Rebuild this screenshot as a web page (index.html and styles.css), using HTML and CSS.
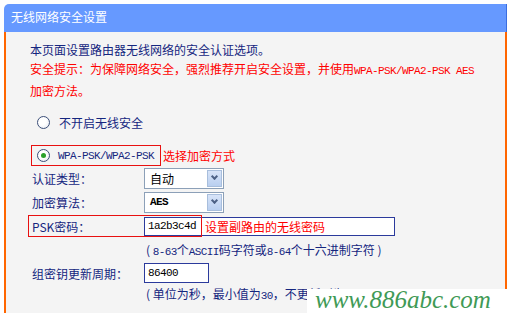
FILE: index.html
```html
<!DOCTYPE html>
<html lang="zh-CN">
<head>
    <meta charset="UTF-8">
    <title>无线网络安全设置</title>
    <link rel="stylesheet" href="styles.css">
</head>
<body>
    <div class="panel">
        <div class="panel-head">无线网络安全设置</div>
        <div class="panel-body">
            <div class="intro">
                <p class="note">本页面设置路由器无线网络的安全认证选项。</p>
                <p class="warn">安全提示：为保障网络安全，强烈推荐开启安全设置，并使用<span class="en">WPA-PSK/WPA2-PSK AES</span></p>
                <p class="warn">加密方法。</p>
            </div>

            <div class="radio-row first">
                <span class="radio"></span>
                <span class="note">不开启无线安全</span>
            </div>

            <div class="radio-row second">
                <span class="mark-box">
                    <span class="radio checked"></span>
                    <span class="note en">WPA-PSK/WPA2-PSK</span>
                </span>
                <span class="warn">选择加密方式</span>
            </div>

            <div class="form-row">
                <span class="label">认证类型：</span>
                <div class="select">
                    <span class="select-text">自动</span>
                    <span class="select-btn"></span>
                </div>
            </div>

            <div class="form-row">
                <span class="label">加密算法：</span>
                <div class="select">
                    <span class="select-text en bold">AES</span>
                    <span class="select-btn"></span>
                </div>
            </div>

            <div class="form-row psk">
                <span class="label">PSK密码：</span>
                <div class="text-input wide">
                    <span class="en value">1a2b3c4d</span>
                    <span class="warn tip">设置副路由的无线密码</span>
                </div>
                <span class="red-mark"></span>
            </div>

            <div class="hint">( <span class="en">8-63</span>个<span class="en">ASCII</span>码字符或<span class="en">8-64</span>个十六进制字符 )</div>

            <div class="form-row">
                <span class="label">组密钥更新周期：</span>
                <div class="text-input short">
                    <span class="en value">86400</span>
                </div>
            </div>

            <div class="hint last">( 单位为秒，最小值为<span class="en">30</span>，不更新则为<span class="en">0</span> )</div>
        </div>
    </div>

    <div class="watermark">www.886abc.com</div>
</body>
</html>
```

FILE: styles.css
```css
body {
    margin: 0;
    background-color: #ffffff;
    font-family: "Noto Sans CJK SC", sans-serif;
    font-size: 12px;
    position: relative;
    height: 313px;
    overflow: hidden;
}
p {
    margin: 0;
}
.panel {
    margin: 4px 0 0 4px;
    width: 503px;
}
.panel-head {
    height: 28px;
    line-height: 25px;
    padding-left: 7px;
    background-color: #6699ff;
    border-top-left-radius: 5px;
    border-right: 1px solid #3a6ee0;
    color: #ffffff;
}
.panel-body {
    background-color: #f4f4f4;
    border-left: 2px solid #ff6600;
    border-right: 2px solid #ff6600;
    height: 290px;
    padding-top: 8px;
    box-sizing: border-box;
}
.en {
    font-family: "Liberation Mono", monospace;
    font-size: 11px;
    letter-spacing: -0.6px;
}
.bold {
    font-weight: bold;
}
.note, .label, .hint {
    color: #15267f;
}
.warn {
    color: #ff0000;
}
.intro {
    padding-left: 24px;
    line-height: 19px;
}
.radio-row {
    display: flex;
    align-items: center;
    height: 21px;
}
.radio-row.first {
    margin-top: 12px;
    padding-left: 31px;
}
.radio-row.first .radio {
    margin-right: 9px;
}
.radio-row.second {
    margin-top: 12px;
    padding-left: 25px;
}
.mark-box {
    display: flex;
    align-items: center;
    height: 19px;
    width: 123px;
    border: 1px solid #e81010;
    padding-left: 5px;
    margin-right: 2px;
}
.mark-box .radio {
    margin-right: 8px;
}
.radio {
    width: 11px;
    height: 11px;
    border: 1px solid #3c4f78;
    border-radius: 50%;
    background: radial-gradient(circle at 40% 40%, #ffffff 40%, #dfe4ee 100%);
    position: relative;
}
.radio.checked::after {
    content: "";
    position: absolute;
    left: 3px;
    top: 3px;
    width: 5px;
    height: 5px;
    border-radius: 50%;
    background-color: #2aa02a;
}
.form-row {
    display: flex;
    align-items: center;
    height: 24px;
    padding-left: 26px;
    position: relative;
}
.label {
    width: 112px;
}
.select {
    display: flex;
    width: 78px;
    height: 19px;
    border: 1px solid #8ca0b8;
    background-color: #ffffff;
}
.select-text {
    flex: 1;
    line-height: 19px;
    padding-left: 5px;
    color: #000000;
}
.select-btn {
    width: 15px;
    margin: 1px;
    background: linear-gradient(#d8e4f8, #b9cff0);
    border: 1px solid #a8bedc;
    box-sizing: border-box;
    position: relative;
}
.select-btn::after {
    content: "";
    position: absolute;
    left: 4px;
    top: 3px;
    width: 3px;
    height: 3px;
    border-right: 2px solid #4d6185;
    border-bottom: 2px solid #4d6185;
    transform: rotate(45deg);
}
.text-input {
    display: flex;
    align-items: center;
    height: 17px;
    border: 1px solid #2b3a9c;
    background-color: #ffffff;
    padding-left: 3px;
}
.text-input .value {
    color: #000000;
}
.text-input.wide {
    width: 246px;
}
.text-input.short {
    width: 60px;
    height: 18px;
}
.tip {
    margin-left: 9px;
}
.red-mark {
    position: absolute;
    left: 22px;
    top: 1px;
    width: 172px;
    height: 20px;
    border: 1px solid #e81010;
}
.hint {
    height: 23px;
    line-height: 23px;
    padding-left: 140px;
}
.hint.last {
    height: 20px;
    line-height: 18px;
}
.watermark {
    position: absolute;
    left: 307px;
    top: 289px;
    right: 0;
    bottom: 0;
    background-color: #ffffff;
    color: #3f9a56;
    font-family: "Liberation Serif", serif;
    font-style: italic;
    font-size: 25px;
    line-height: 22px;
    padding-left: 8px;
    white-space: nowrap;
}
```
